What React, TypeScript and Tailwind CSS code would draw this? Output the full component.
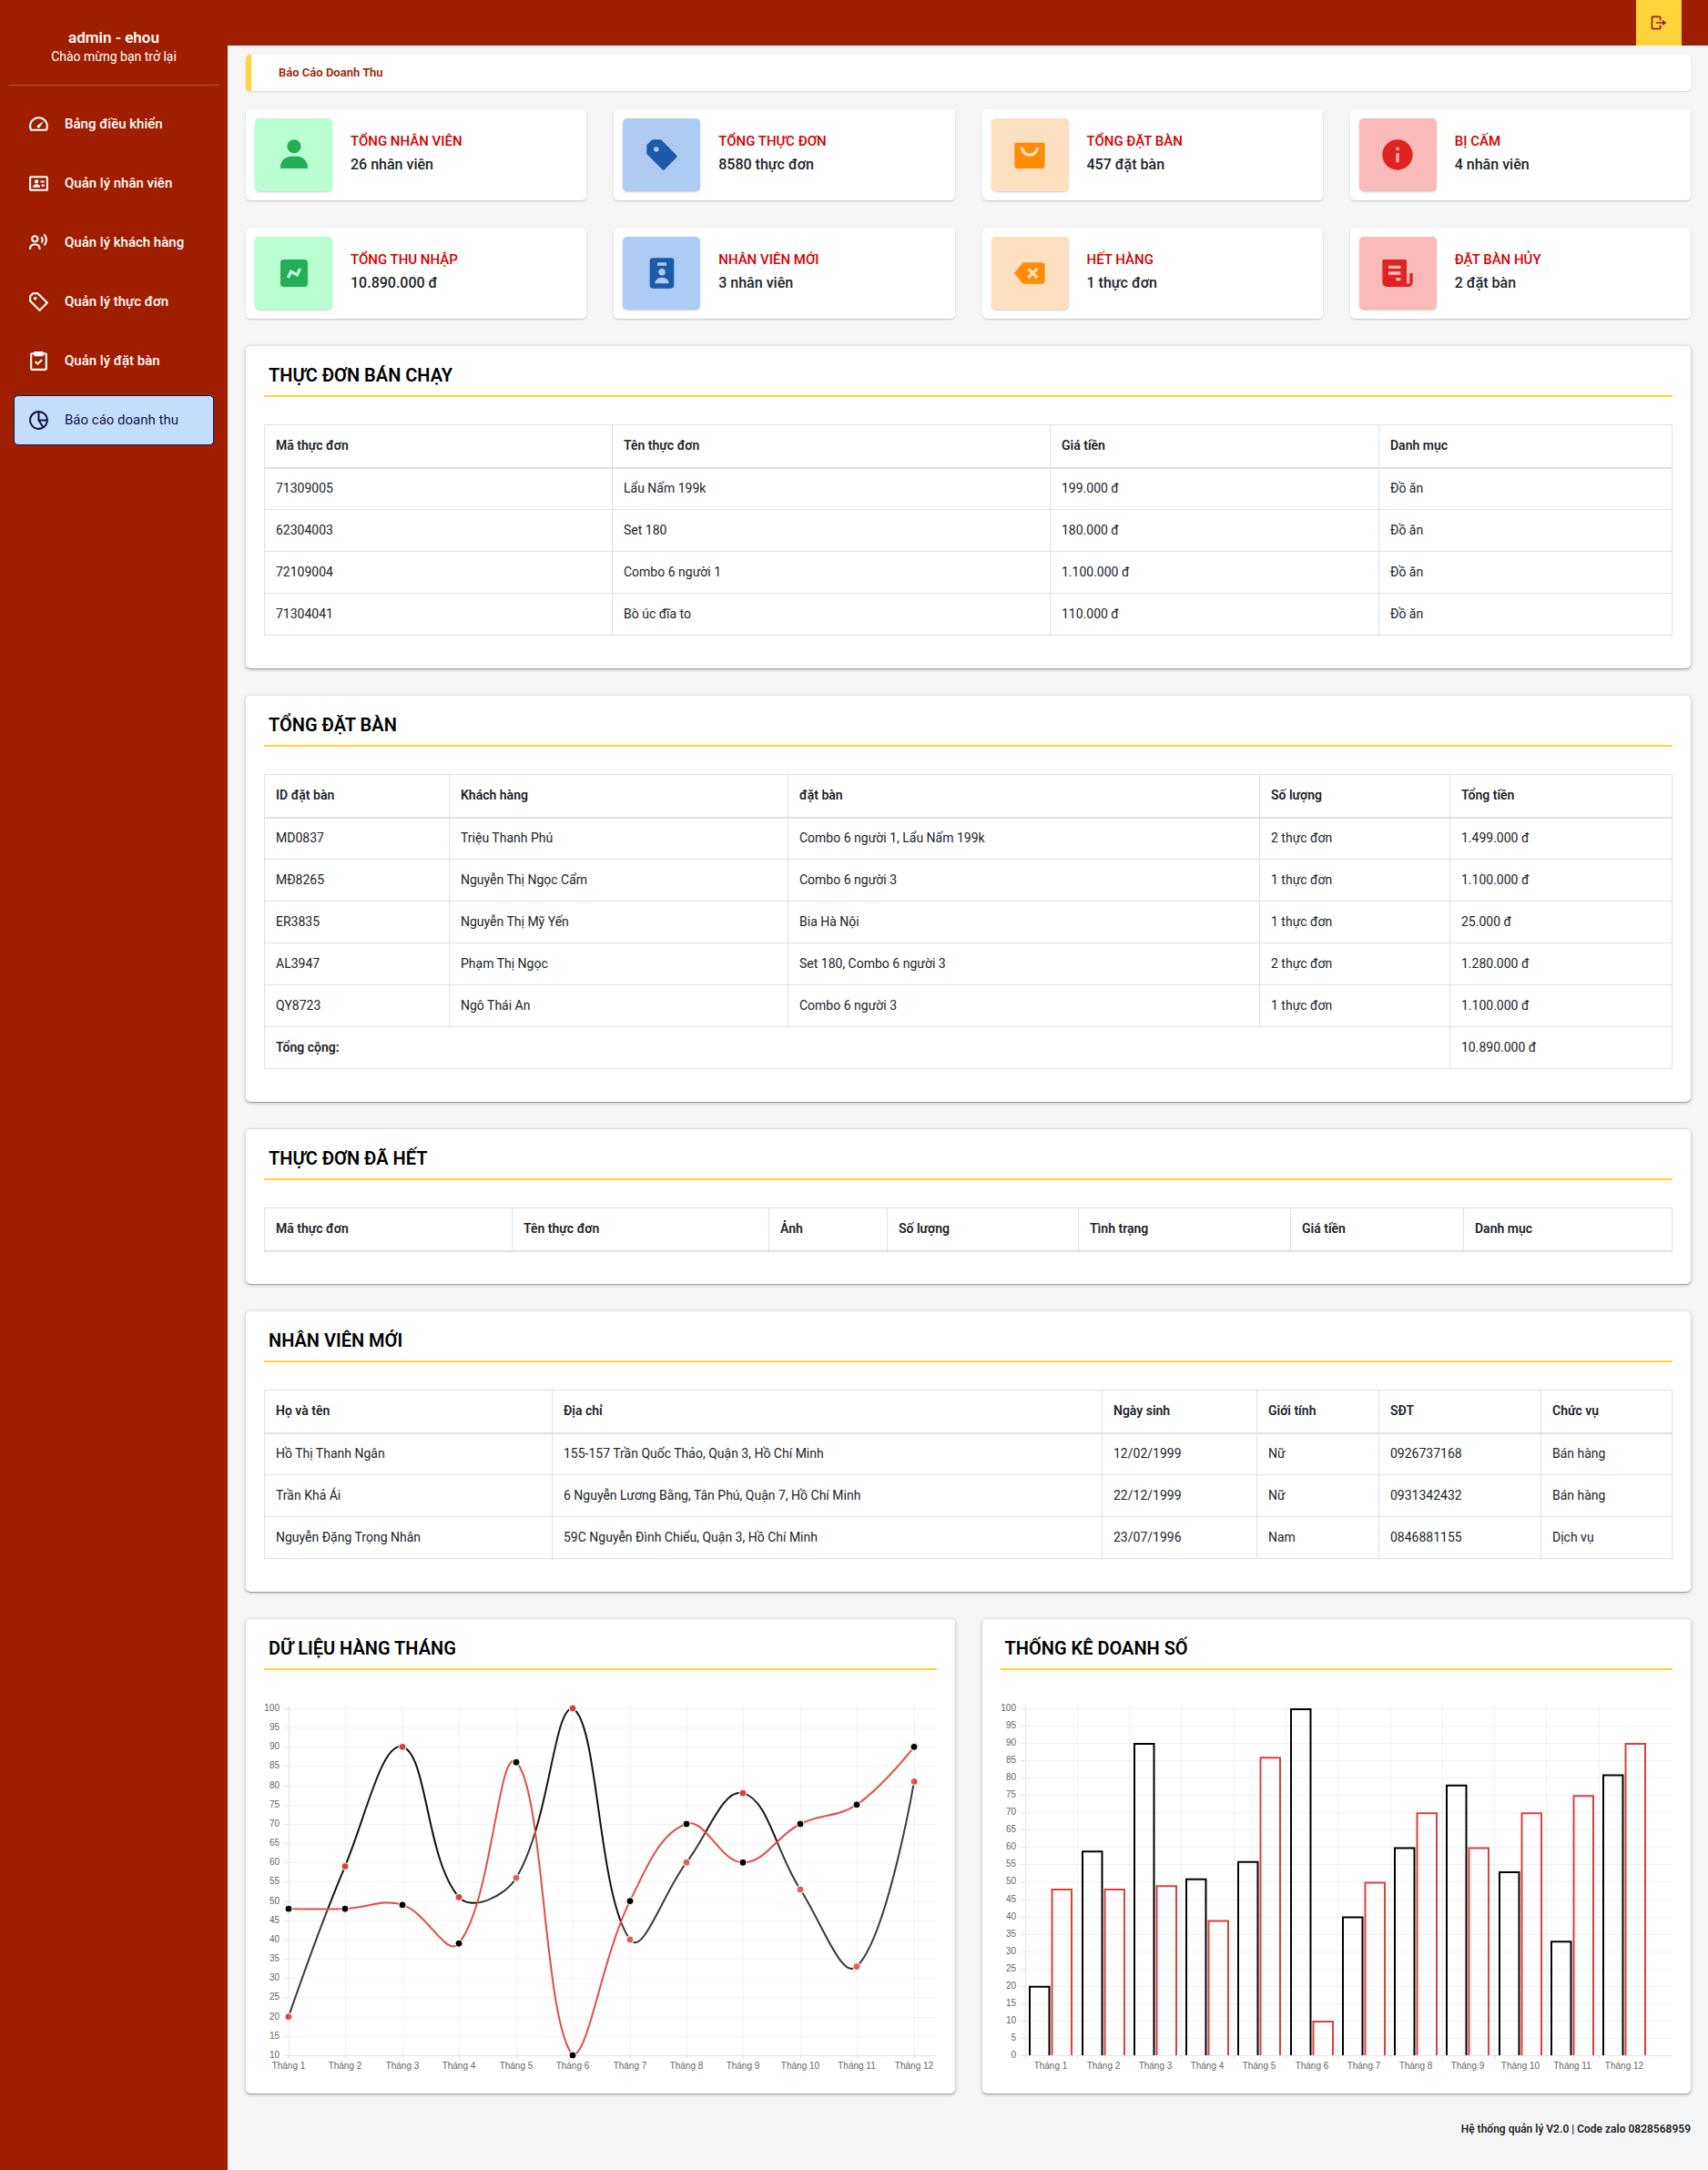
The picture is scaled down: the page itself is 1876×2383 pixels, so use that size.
import React from "react";
import {
  BiIdCard,
  BiLogOut,
  BiPieChartAlt2,
  BiPurchaseTagAlt,
  BiSolidChart,
  BiSolidInfoCircle,
  BiSolidPurchaseTagAlt,
  BiSolidReceipt,
  BiSolidShoppingBagAlt,
  BiSolidTagX,
  BiSolidUser,
  BiSolidUserBadge,
  BiTachometer,
  BiTask,
  BiUserVoice,
} from "react-icons/bi";

const MENU = [
  { label: "Bảng điều khiển", Icon: BiTachometer },
  { label: "Quản lý nhân viên", Icon: BiIdCard },
  { label: "Quản lý khách hàng", Icon: BiUserVoice },
  { label: "Quản lý thực đơn", Icon: BiPurchaseTagAlt },
  { label: "Quản lý đặt bàn", Icon: BiTask },
  { label: "Báo cáo doanh thu", Icon: BiPieChartAlt2, active: true },
];

const GREEN = "bg-[#baffd2] text-[#24ae58]";
const BLUE = "bg-[#aecbf3] text-[#1c5aaa]";
const ORANGE = "bg-[#fde0c0] text-[#ff8b07]";
const RED = "bg-[#f9baba] text-[#e02222]";

const WIDGETS = [
  { title: "TỔNG NHÂN VIÊN", value: "26 nhân viên", tone: GREEN, Icon: BiSolidUser },
  { title: "TỔNG THỰC ĐƠN", value: "8580 thực đơn", tone: BLUE, Icon: BiSolidPurchaseTagAlt },
  { title: "TỔNG ĐẶT BÀN", value: "457 đặt bàn", tone: ORANGE, Icon: BiSolidShoppingBagAlt },
  { title: "BỊ CẤM", value: "4 nhân viên", tone: RED, Icon: BiSolidInfoCircle },
  { title: "TỔNG THU NHẬP", value: "10.890.000 đ", tone: GREEN, Icon: BiSolidChart },
  { title: "NHÂN VIÊN MỚI", value: "3 nhân viên", tone: BLUE, Icon: BiSolidUserBadge },
  { title: "HẾT HÀNG", value: "1 thực đơn", tone: ORANGE, Icon: BiSolidTagX },
  { title: "ĐẶT BÀN HỦY", value: "2 đặt bàn", tone: RED, Icon: BiSolidReceipt },
];

const MONTHS = Array.from({ length: 12 }, (_, i) => `Tháng ${i + 1}`);
const SERIES_A = [20, 59, 90, 51, 56, 100, 40, 60, 78, 53, 33, 81];
const SERIES_B = [48, 48, 49, 39, 86, 10, 50, 70, 60, 70, 75, 90];

const TOP = 12;
const BASE = 393;
const INK = "#000";
const CORAL = "#dc403b";

function Tile({ title, children, className = "" }: { title: string; children: React.ReactNode; className?: string }) {
  return (
    <section
      className={`rounded-[5px] bg-white p-5 shadow-[0_1px_0_rgba(0,0,0,0.22),0_1px_4px_rgba(0,0,0,0.28)] ${className}`}
    >
      <h3 className="mb-[30px] flex h-9 items-start border-b-2 border-[#ffd43b] pl-[5px] text-[20px] leading-[25px] font-semibold text-black">
        {title}
      </h3>
      {children}
    </section>
  );
}

function DataTable({
  widths,
  head,
  rows,
  total,
}: {
  widths: number[];
  head: string[];
  rows: string[][];
  total?: string;
}) {
  const cell = "h-[46px] border border-[#dee2e6] px-3 py-0 text-left";
  return (
    <table className="mb-4 w-full table-fixed border-collapse border border-[#dee2e6] text-[14px] leading-[21px] text-[#212529]">
      <colgroup>
        {widths.map((w, i) => (
          <col key={i} style={{ width: w }} />
        ))}
      </colgroup>
      <thead>
        <tr>
          {head.map((h) => (
            <th key={h} className="h-[47px] border border-b-2 border-[#dee2e6] px-3 py-0 text-left font-semibold">
              {h}
            </th>
          ))}
        </tr>
      </thead>
      <tbody>
        {rows.map((r) => (
          <tr key={r[0]}>
            {r.map((c, i) => (
              <td key={i} className={cell}>
                {c}
              </td>
            ))}
          </tr>
        ))}
        {total && (
          <tr>
            <th colSpan={head.length - 1} className={`${cell} font-semibold`}>
              Tổng cộng:
            </th>
            <td className={cell}>{total}</td>
          </tr>
        )}
      </tbody>
    </table>
  );
}

function Grid({ min, xs, labelXs }: { min: number; xs: number[]; labelXs: number[] }) {
  const ticks: number[] = [];
  for (let v = min; v <= 100; v += 5) ticks.push(v);
  const step = (BASE - TOP) / (100 - min);
  return (
    <g shapeRendering="crispEdges">
      {ticks.map((v) => {
        const y = Math.round(BASE - (v - min) * step - 0.01);
        return (
          <g key={v}>
            <rect x={22} y={y} width={5} height={1} fill="rgba(0,0,0,0.1)" />
            <rect x={27} y={y} width={711} height={1} fill={v === min ? "rgba(0,0,0,0.1)" : "rgba(0,0,0,0.05)"} />
            <text x={17} y={y + 3} textAnchor="end">
              {v}
            </text>
          </g>
        );
      })}
      {xs.map((x, i) => (
        <g key={x}>
          <rect x={x} y={9} width={1} height={384} fill={i === 0 ? "rgba(0,0,0,0.1)" : "rgba(0,0,0,0.05)"} />
          <rect x={x} y={393} width={1} height={4} fill="rgba(0,0,0,0.1)" />
        </g>
      ))}
      {labelXs.map((x, i) => (
        <text key={x} x={x} y={408} textAnchor="middle">
          {MONTHS[i]}
        </text>
      ))}
    </g>
  );
}

const LINE_X = [27, 89, 152, 214, 277, 339, 402, 464, 526, 589, 651, 714];
const BAR_X = [55, 113, 170, 227, 284, 342, 399, 456, 513, 571, 628, 685];
const BAR_GRID_X = [27, 84, 141, 198, 256, 313, 370, 428, 485, 542, 599, 657];

function smoothPath(values: number[]) {
  const pts = values.map((v, i) => ({ x: LINE_X[i], y: BASE - ((v - 10) * (BASE - TOP)) / 90 }));
  const clamp = (y: number) => Math.min(BASE, Math.max(TOP, y));
  const ctrl = pts.map((p, i) => {
    if (i === 0 || i === pts.length - 1) return { inner: p, outer: p };
    const a = pts[i - 1];
    const b = pts[i + 1];
    const d0 = Math.hypot(p.x - a.x, p.y - a.y);
    const d1 = Math.hypot(b.x - p.x, b.y - p.y);
    const fa = (0.4 * d0) / (d0 + d1);
    const fb = (0.4 * d1) / (d0 + d1);
    return {
      inner: { x: p.x - fa * (b.x - a.x), y: clamp(p.y - fa * (b.y - a.y)) },
      outer: { x: p.x + fb * (b.x - a.x), y: clamp(p.y + fb * (b.y - a.y)) },
    };
  });
  let d = `M${pts[0].x} ${pts[0].y}`;
  for (let i = 1; i < pts.length; i++) {
    const o = ctrl[i - 1].outer;
    const n = ctrl[i].inner;
    d += `C${o.x} ${o.y} ${n.x} ${n.y} ${pts[i].x} ${pts[i].y}`;
  }
  return { d, pts };
}

function LineSeries({ values, stroke, dot }: { values: number[]; stroke: string; dot: string }) {
  const { d, pts } = smoothPath(values);
  return (
    <g>
      <path d={d} fill="none" stroke={stroke} strokeWidth={2} />
      <path d={`${d}L714 ${BASE}L27 ${BASE}Z`} fill="rgba(255,255,255,0.16)" />
      {pts.map((p) => (
        <circle key={p.x} cx={p.x} cy={p.y} r={4} fill={dot} stroke="#fff" strokeWidth={1} />
      ))}
    </g>
  );
}

function LineChart() {
  return (
    <svg viewBox="0 0 738 415" className="block h-[415px] w-[738px] fill-[#666] font-['Liberation_Sans',Arial,sans-serif] text-[10px]">
      <Grid min={10} xs={LINE_X} labelXs={LINE_X} />
      <LineSeries values={SERIES_A} stroke={INK} dot={CORAL} />
      <LineSeries values={SERIES_B} stroke={CORAL} dot={INK} />
    </svg>
  );
}

function Bar({ x, value, stroke }: { x: number; value: number; stroke: string }) {
  const y = BASE - value * 3.81 + 1;
  return <path d={`M${x + 1} ${BASE}V${y}H${x + 22.5}V${BASE}`} fill="none" stroke={stroke} strokeWidth={2} />;
}

function BarChart() {
  return (
    <svg viewBox="0 0 738 415" className="block h-[415px] w-[738px] fill-[#666] font-['Liberation_Sans',Arial,sans-serif] text-[10px]">
      <Grid min={0} xs={BAR_GRID_X} labelXs={BAR_X} />
      {BAR_X.map((x, i) => (
        <g key={x}>
          <Bar x={x - 24} value={SERIES_A[i]} stroke={INK} />
          <Bar x={x + 0.5} value={SERIES_B[i]} stroke={CORAL} />
        </g>
      ))}
    </svg>
  );
}

function Sidebar() {
  return (
    <aside className="w-[250px] shrink-0 bg-[#a01e00] text-white">
      <div className="mx-[10px] flex h-[94px] flex-col items-center border-b border-white/25 pt-[30px]">
        <p className="text-[17px] leading-[22px] font-semibold">admin - ehou</p>
        <p className="text-[14px] leading-[21px]">Chào mừng bạn trở lại</p>
      </div>
      <nav className="mt-[15px] flex flex-col gap-[10px] px-[15px]">
        {MENU.map(({ label, Icon, active }) => (
          <a
            key={label}
            className={`flex h-[55px] items-center gap-4 rounded-[5px] border pl-[14px] text-[15px] ${
              active
                ? "border-[#101a5c] bg-[#c6defd] font-normal text-[#15154f]"
                : "border-transparent font-medium"
            }`}
          >
            <Icon className="h-[25px] w-[25px]" />
            <span>{label}</span>
          </a>
        ))}
      </nav>
    </aside>
  );
}

export default function App() {
  return (
    <div className="flex h-[2383px] w-[1876px] bg-[#f5f5f5] font-[Roboto,sans-serif] text-[#212529]">
      <Sidebar />
      <div className="flex flex-1 flex-col">
        <header className="flex h-[50px] justify-end bg-[#a01e00] pr-[30px]">
          <button className="flex w-[50px] items-center justify-center bg-[#ffd43b] text-[#a01e00]">
            <BiLogOut className="h-5 w-5 rotate-180" />
          </button>
        </header>
        <main className="flex flex-col px-5 pt-[10px]">
          <div className="flex h-10 items-center rounded-[5px] border-l-[6px] border-[#ffd43b] bg-white pl-[30px] text-[13px] font-semibold text-[#a01e00] shadow-[0_1px_2px_rgba(0,0,0,0.12)]">
            Báo Cáo Doanh Thu
          </div>
          <div className="mt-5 grid grid-cols-4 gap-[30px]">
            {WIDGETS.map(({ title, value, tone, Icon }) => (
              <div
                key={title}
                className="flex h-[100px] items-center gap-5 rounded-[5px] bg-white pl-[10px] shadow-[0_1px_2px_rgba(0,0,0,0.2)]"
              >
                <div
                  className={`flex h-20 w-[85px] items-center justify-center rounded-[5px] shadow-[0_1px_2px_rgba(0,0,0,0.2)] ${tone}`}
                >
                  <Icon className="h-10 w-10" />
                </div>
                <div className="pb-1">
                  <h4 className="text-[15px] leading-[22px] font-medium text-[#d60000]">{title}</h4>
                  <p className="mt-[3px] text-[16px] leading-6 font-medium">{value}</p>
                </div>
              </div>
            ))}
          </div>
          <div className="mt-[30px] flex flex-col gap-[30px]">
            <Tile title="THỰC ĐƠN BÁN CHẠY">
              <DataTable
                widths={[382, 481, 361, 322]}
                head={["Mã thực đơn", "Tên thực đơn", "Giá tiền", "Danh mục"]}
                rows={[
                  ["71309005", "Lẩu Nấm 199k", "199.000 đ", "Đồ ăn"],
                  ["62304003", "Set 180", "180.000 đ", "Đồ ăn"],
                  ["72109004", "Combo 6 người 1", "1.100.000 đ", "Đồ ăn"],
                  ["71304041", "Bò úc đĩa to", "110.000 đ", "Đồ ăn"],
                ]}
              />
            </Tile>
            <Tile title="TỔNG ĐẶT BÀN">
              <DataTable
                widths={[203, 372, 518, 209, 244]}
                head={["ID đặt bàn", "Khách hàng", "đặt bàn", "Số lượng", "Tổng tiền"]}
                rows={[
                  ["MD0837", "Triệu Thanh Phú", "Combo 6 người 1, Lẩu Nấm 199k", "2 thực đơn", "1.499.000 đ"],
                  ["MĐ8265", "Nguyễn Thị Ngọc Cẩm", "Combo 6 người 3", "1 thực đơn", "1.100.000 đ"],
                  ["ER3835", "Nguyễn Thị Mỹ Yến", "Bia Hà Nội", "1 thực đơn", "25.000 đ"],
                  ["AL3947", "Phạm Thị Ngọc", "Set 180, Combo 6 người 3", "2 thực đơn", "1.280.000 đ"],
                  ["QY8723", "Ngô Thái An", "Combo 6 người 3", "1 thực đơn", "1.100.000 đ"],
                ]}
                total="10.890.000 đ"
              />
            </Tile>
            <Tile title="THỰC ĐƠN ĐÃ HẾT" className="h-[170px]">
              <DataTable
                widths={[272, 282, 130, 210, 233, 190, 229]}
                head={["Mã thực đơn", "Tên thực đơn", "Ảnh", "Số lượng", "Tình trạng", "Giá tiền", "Danh mục"]}
                rows={[]}
              />
            </Tile>
            <Tile title="NHÂN VIÊN MỚI">
              <DataTable
                widths={[316, 604, 170, 134, 178, 144]}
                head={["Họ và tên", "Địa chỉ", "Ngày sinh", "Giới tính", "SĐT", "Chức vụ"]}
                rows={[
                  ["Hồ Thị Thanh Ngân", "155-157 Trần Quốc Thảo, Quận 3, Hồ Chí Minh", "12/02/1999", "Nữ", "0926737168", "Bán hàng"],
                  ["Trần Khả Ái", "6 Nguyễn Lương Bằng, Tân Phú, Quận 7, Hồ Chí Minh", "22/12/1999", "Nữ", "0931342432", "Bán hàng"],
                  ["Nguyễn Đặng Trọng Nhân", "59C Nguyễn Đình Chiểu, Quận 3, Hồ Chí Minh", "23/07/1996", "Nam", "0846881155", "Dịch vụ"],
                ]}
              />
            </Tile>
            <div className="grid grid-cols-2 gap-[30px]">
              <Tile title="DỮ LIỆU HÀNG THÁNG" className="h-[521px]">
                <LineChart />
              </Tile>
              <Tile title="THỐNG KÊ DOANH SỐ" className="h-[521px]">
                <BarChart />
              </Tile>
            </div>
          </div>
          <footer className="mt-[29px] text-right text-[12px] leading-5 font-semibold">
            Hệ thống quản lý V2.0 | Code zalo 0828568959
          </footer>
        </main>
      </div>
    </div>
  );
}
